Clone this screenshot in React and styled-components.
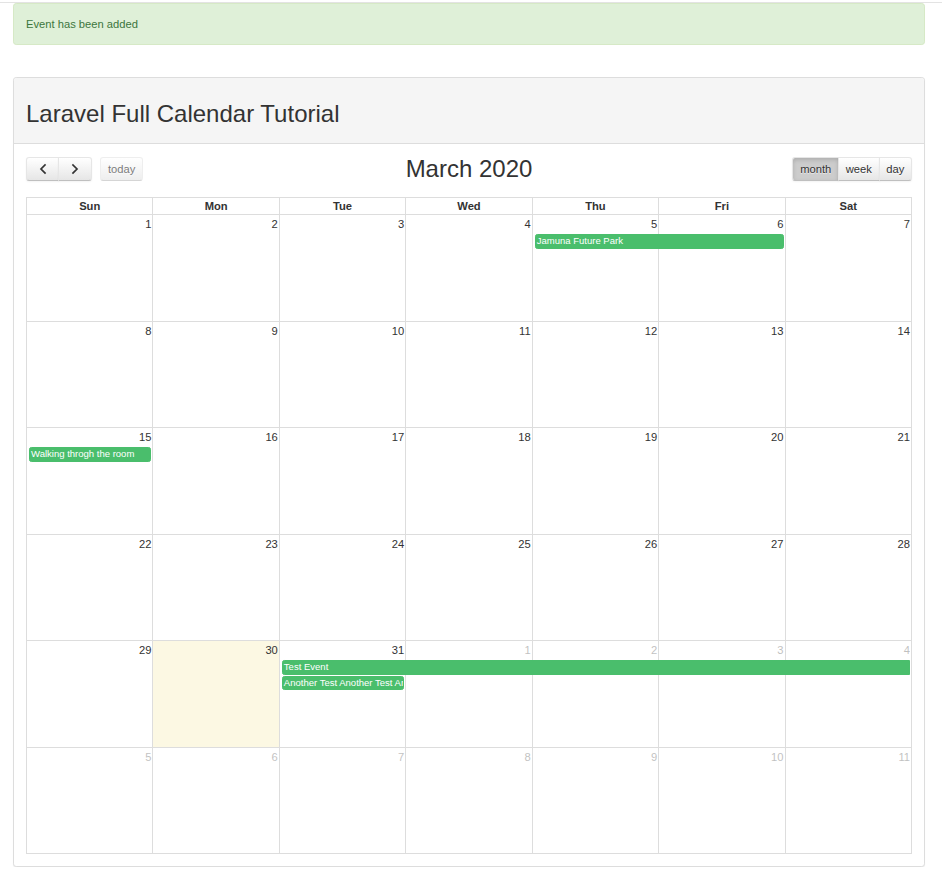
import React from 'react';
import styled, { createGlobalStyle, css } from 'styled-components';

const GlobalStyle = createGlobalStyle`
  html, body {
    margin: 0;
    padding: 0;
    background: #fff;
  }
  body {
    font-family: "Liberation Sans", Arial, Helvetica, sans-serif;
    font-size: 11.2px;
    line-height: 1.42857;
    color: #333;
  }
  * {
    box-sizing: border-box;
  }
`;

const days = ['Sun', 'Mon', 'Tue', 'Wed', 'Thu', 'Fri', 'Sat'];

// one entry per week; other = not in March
const weeks = [
  { dates: [1, 2, 3, 4, 5, 6, 7].map((d) => ({ d })) },
  { dates: [8, 9, 10, 11, 12, 13, 14].map((d) => ({ d })) },
  { dates: [15, 16, 17, 18, 19, 20, 21].map((d) => ({ d })) },
  { dates: [22, 23, 24, 25, 26, 27, 28].map((d) => ({ d })) },
  {
    dates: [
      { d: 29 }, { d: 30, today: true }, { d: 31 },
      { d: 1, other: true }, { d: 2, other: true }, { d: 3, other: true }, { d: 4, other: true },
    ],
  },
  { dates: [5, 6, 7, 8, 9, 10, 11].map((d) => ({ d, other: true })) },
];

const events = [
  { week: 0, start: 4, end: 6, level: 0, title: 'Jamuna Future Park' },
  { week: 2, start: 0, end: 1, level: 0, title: 'Walking throgh the room' },
  { week: 4, start: 2, end: 7, level: 0, title: 'Test Event', notEnd: true },
  { week: 4, start: 2, end: 3, level: 1, title: 'Another Test Another Test Another Test' },
];

const Page = styled.div`
  width: 942px;
  margin-top: 2px;
  border-top: 1px solid #e3e3e3;
`;

const Container = styled.div`
  width: 912px;
  margin-left: 13px;
`;

const Alert = styled.div`
  padding: 12px;
  margin-bottom: 32px;
  border: 1px solid #d6e9c6;
  border-radius: 3.2px;
  background: #dff0d8;
  color: #3c763d;
`;

const Panel = styled.div`
  border: 1px solid #ddd;
  border-radius: 3.2px;
  background: #fff;
  box-shadow: 0 1px 1px rgba(0, 0, 0, 0.05);
`;

const PanelHeading = styled.div`
  padding: 8px 12px;
  background: #f5f5f5;
  border-bottom: 1px solid #ddd;
  border-radius: 3px 3px 0 0;
`;

const PageTitle = styled.h2`
  margin: 15px 0 8px;
  font-size: 24px;
  font-weight: 500;
  line-height: 1.1;
  color: #333;
`;

const PanelBody = styled.div`
  padding: 12px;
`;

const Toolbar = styled.div`
  display: grid;
  grid-template-columns: 1fr auto 1fr;
  align-items: start;
  margin-bottom: 14.6px;
`;

const ToolbarSide = styled.div`
  display: flex;
  justify-self: ${(p) => (p.$right ? 'end' : 'start')};
  margin-top: 1px;
`;

const MonthTitle = styled.h2`
  margin: 0;
  font-size: 24px;
  font-weight: 500;
  line-height: 1.1;
  color: #333;
`;

const ButtonGroup = styled.div`
  display: flex;
  & + & {
    margin-left: 8.4px;
  }
`;

const Button = styled.button`
  display: flex;
  align-items: center;
  justify-content: center;
  height: 2.1em;
  padding: 0 0.6em;
  margin: 0;
  font-family: inherit;
  font-size: 11.2px;
  color: #333;
  border: 1px solid;
  border-color: #e6e6e6 #e6e6e6 #bfbfbf;
  background: #f5f5f5 linear-gradient(to bottom, #fff, #e6e6e6);
  text-shadow: 0 1px 1px rgba(255, 255, 255, 0.75);
  box-shadow: inset 0 1px 0 rgba(255, 255, 255, 0.2), 0 1px 2px rgba(0, 0, 0, 0.05);
  border-radius: 0;
  & + & {
    margin-left: -1px;
  }
  &:first-child {
    border-top-left-radius: 3.2px;
    border-bottom-left-radius: 3.2px;
  }
  &:last-child {
    border-top-right-radius: 3.2px;
    border-bottom-right-radius: 3.2px;
  }
  ${(p) =>
    p.$active &&
    css`
      background: #ccc;
      box-shadow: inset 0 2px 4px rgba(0, 0, 0, 0.15), 0 1px 2px rgba(0, 0, 0, 0.05);
    `}
  ${(p) =>
    p.disabled &&
    css`
      opacity: 0.65;
      box-shadow: none;
    `}
`;

const Calendar = styled.div`
  border-left: 1px solid #ddd;
  border-top: 1px solid #ddd;
`;

const HeadRow = styled.div`
  display: grid;
  grid-template-columns: repeat(7, 1fr);
  border-bottom: 1px solid #ddd;
`;

const HeadCell = styled.div`
  border-right: 1px solid #ddd;
  text-align: center;
  font-weight: bold;
`;

const Week = styled.div`
  display: grid;
  grid-template-columns: repeat(7, 1fr);
  grid-template-rows: auto auto auto 1fr;
  height: 106.5px;
  border-bottom: 1px solid #ddd;
`;

const DayBg = styled.div`
  grid-row: 1 / -1;
  border-right: 1px solid #ddd;
  background: ${(p) => (p.$today ? '#fcf8e3' : 'transparent')};
`;

const DayNumber = styled.div`
  grid-row: 1;
  padding: 1px 2px;
  line-height: 16px;
  text-align: right;
  color: #333;
  opacity: ${(p) => (p.$other ? 0.3 : 1)};
  position: relative;
`;

const Event = styled.div`
  position: relative;
  margin: 1px 2px 0 2px;
  padding: 0 1px;
  font-size: 9.52px;
  line-height: 1.3;
  color: #fff;
  background: #4abe6c;
  border: 1px solid #4abe6c;
  border-radius: ${(p) => (p.$notEnd ? '2.4px 0 0 2.4px' : '2.4px')};
  white-space: nowrap;
  overflow: hidden;
  min-width: 0;
`;

const Chevron = ({ dir }) => (
  <svg width="18" height="12" viewBox="0 0 18 12" aria-hidden="true">
    <polyline
      points={dir === 'left' ? '11,2 7,6 11,10' : '7,2 11,6 7,10'}
      fill="none"
      stroke="#333"
      strokeWidth="1.7"
      strokeLinecap="square"
    />
  </svg>
);

const App = () => {
  return (
    <Page>
      <GlobalStyle />
      <Container>
        <Alert>Event has been added</Alert>
        <Panel>
          <PanelHeading>
            <PageTitle>Laravel Full Calendar Tutorial</PageTitle>
          </PanelHeading>
          <PanelBody>
            <Toolbar>
              <ToolbarSide>
                <ButtonGroup>
                  <Button aria-label="prev"><Chevron dir="left" /></Button>
                  <Button aria-label="next"><Chevron dir="right" /></Button>
                </ButtonGroup>
                <ButtonGroup>
                  <Button disabled>today</Button>
                </ButtonGroup>
              </ToolbarSide>
              <MonthTitle>March 2020</MonthTitle>
              <ToolbarSide $right>
                <ButtonGroup>
                  <Button $active>month</Button>
                  <Button>week</Button>
                  <Button>day</Button>
                </ButtonGroup>
              </ToolbarSide>
            </Toolbar>
            <Calendar>
              <HeadRow>
                {days.map((day) => (
                  <HeadCell key={day}>{day}</HeadCell>
                ))}
              </HeadRow>
              {weeks.map((week, w) => (
                <Week key={w}>
                  {week.dates.map((date, i) => (
                    <DayBg key={'bg' + i} $today={date.today} style={{ gridColumn: i + 1 }} />
                  ))}
                  {week.dates.map((date, i) => (
                    <DayNumber key={'n' + i} $other={date.other} style={{ gridColumn: i + 1 }}>
                      {date.d}
                    </DayNumber>
                  ))}
                  {events
                    .filter((ev) => ev.week === w)
                    .map((ev) => (
                      <Event
                        key={ev.title}
                        $notEnd={ev.notEnd}
                        style={{ gridColumn: `${ev.start + 1} / ${ev.end + 1}`, gridRow: ev.level + 2 }}
                      >
                        {ev.title}
                      </Event>
                    ))}
                </Week>
              ))}
            </Calendar>
          </PanelBody>
        </Panel>
      </Container>
    </Page>
  );
};

export default App;
